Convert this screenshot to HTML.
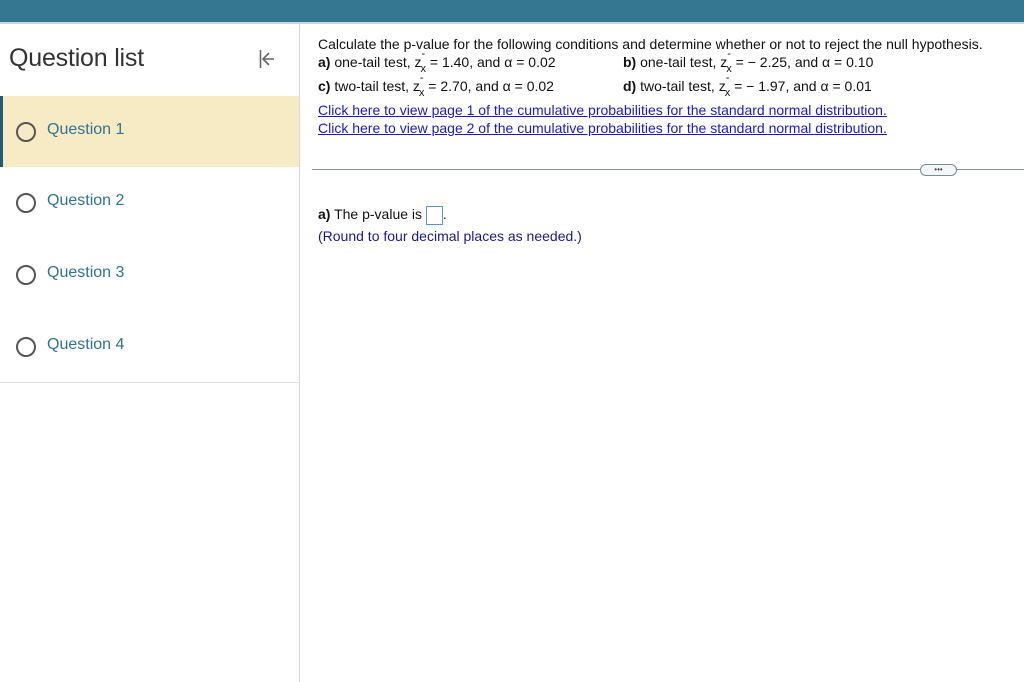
<!DOCTYPE html>
<html><head><meta charset="utf-8"><style>
body{margin:0;width:1024px;height:682px;overflow:hidden;background:#fff;font-family:"Liberation Sans",Arial,sans-serif;position:relative}
.hdr{position:absolute;left:0;top:0;width:1024px;height:22px;background:#357691;border-bottom:2px solid #c5d7e3}
.side{position:absolute;left:0;top:24px;width:299px;height:658px;border-right:1px solid #d8d8d8}
.title{position:absolute;left:9px;top:44px;font-size:25px;color:#333;font-weight:500;letter-spacing:-0.2px}
.item{position:absolute;left:0;width:299px;height:71px}
.item .c{position:absolute;left:16px;top:26px;width:16px;height:16px;border:2px solid #555;border-radius:50%}
.item .t{position:absolute;left:47px;top:25px;font-size:16px;color:#2f7393}
.sel{background:#f7ebc5;border-left:3px solid #235a78;box-sizing:border-box}
.sel .c{left:13px}.sel .t{left:44px}
.tx{position:absolute;font-size:14px;color:#111;white-space:nowrap}
.lk{position:absolute;left:318px;font-size:14px;color:#1a1acc;text-decoration:underline;white-space:nowrap}
sub{font-size:11px;vertical-align:-5px;margin-left:-1px}
.z{position:relative}
.z i{position:absolute;left:7px;top:-6px;font-style:normal;font-size:11px}
</style></head><body>
<div class="hdr"></div>
<div class="side">
<div class="title" style="top:20px">Question list</div>
<svg style="position:absolute;left:259px;top:25px" width="16" height="20" viewBox="0 0 16 20"><path d="M1.5 1v18M15 10H4M10 4L4 10l6 6" stroke="#666" stroke-width="1.6" fill="none"/></svg>
<div class="item sel" style="top:72px"><div class="c"></div><div class="t">Question 1</div></div>
<div class="item" style="top:143px"><div class="c"></div><div class="t">Question 2</div></div>
<div class="item" style="top:215px"><div class="c"></div><div class="t">Question 3</div></div>
<div class="item" style="top:287px;border-bottom:1px solid #e3e3e3"><div class="c"></div><div class="t">Question 4</div></div>
</div>
<div class="tx" style="left:318px;top:36px">Calculate the p-value for the following conditions and determine whether or not to reject the null hypothesis.</div>
<div class="tx" style="left:318px;top:54px"><b>a)</b> one-tail test, <span class="z">z<sub>x</sub><i>-</i></span> = 1.40, and α = 0.02</div>
<div class="tx" style="left:623px;top:54px"><b>b)</b> one-tail test, <span class="z">z<sub>x</sub><i>-</i></span> = − 2.25, and α = 0.10</div>
<div class="tx" style="left:318px;top:78px"><b>c)</b> two-tail test, <span class="z">z<sub>x</sub><i>-</i></span> = 2.70, and α = 0.02</div>
<div class="tx" style="left:623px;top:78px"><b>d)</b> two-tail test, <span class="z">z<sub>x</sub><i>-</i></span> = − 1.97, and α = 0.01</div>
<div class="lk" style="top:102px">Click here to view page 1 of the cumulative probabilities for the standard normal distribution.</div>
<div class="lk" style="top:120px">Click here to view page 2 of the cumulative probabilities for the standard normal distribution.</div>
<div style="position:absolute;left:312px;top:169px;width:712px;height:1px;background:#8a94a0"></div>
<div style="position:absolute;left:920px;top:164px;width:35px;height:10px;border:1px solid #7a8898;border-radius:6px;background:#f4f6f8;font-size:8px;line-height:9px;text-align:center;color:#345">•••</div>
<div class="tx" style="left:318px;top:206px"><b>a)</b> The p-value is <span style="display:inline-block;width:17px;height:19px;border:1px solid #5b8fd6;vertical-align:-6px;box-sizing:border-box"></span>.</div>
<div class="tx" style="left:318px;top:228px;color:#1a1a8c">(Round to four decimal places as needed.)</div>
</body></html>
